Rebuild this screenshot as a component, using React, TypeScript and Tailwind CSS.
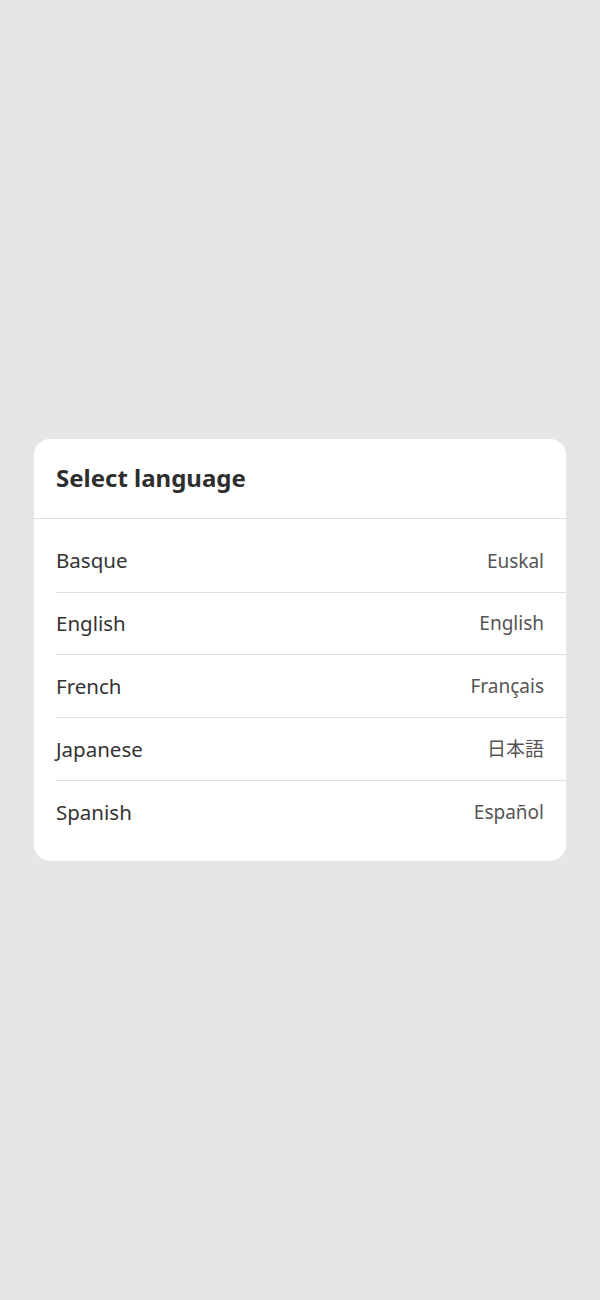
import React from "react";

const rows = [
  { name: "Basque", native: "Euskal" },
  { name: "English", native: "English" },
  { name: "French", native: "Français" },
  { name: "Japanese", native: "日本語" },
  { name: "Spanish", native: "Español" },
];

export default function App() {
  return (
    <div
      className="w-[600px] h-[1300px] bg-[#e6e6e6] flex flex-col pt-[439px] px-[34px]"
      style={{ fontFamily: '"Noto Sans", "Noto Sans CJK JP", sans-serif' }}
    >
      <div className="bg-white rounded-[16px] overflow-hidden">
        <div className="h-[80px] flex items-center pb-[2px] px-[22px] border-b border-[#e0e0e0]">
          <h1 className="text-[24px] font-bold text-[#2e2e2e] leading-none">Select language</h1>
        </div>
        <div className="pt-[11px] pb-[18px] pl-[22px]">
          {rows.map((r, i) => (
            <div
              key={r.name}
              className={
                "h-[62.7px] flex items-center justify-between pr-[22px] " +
                (i < rows.length - 1 ? "border-b border-[#dedede]" : "")
              }
            >
              <span className="text-[20.5px] text-[#333333]">{r.name}</span>
              <span className="text-[19px] text-[#555555]">{r.native}</span>
            </div>
          ))}
        </div>
      </div>
    </div>
  );
}
